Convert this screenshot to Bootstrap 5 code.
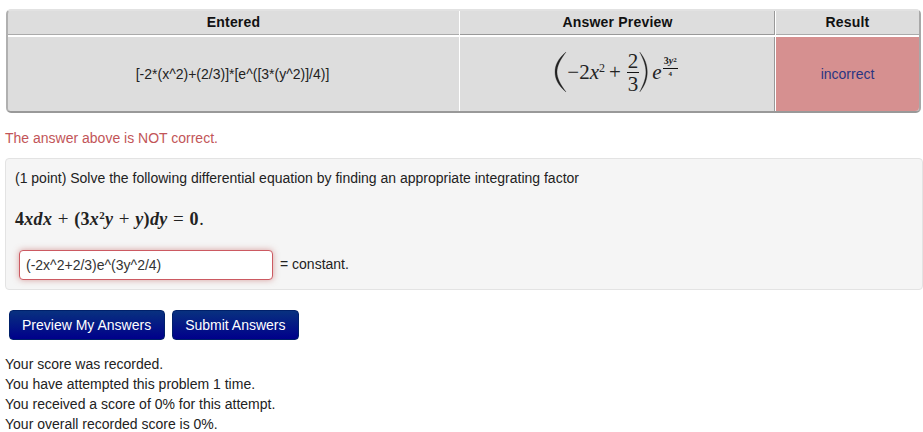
<!DOCTYPE html>
<html lang="en"><head><meta charset="utf-8"><title>Problem</title>
<link rel="stylesheet" href="https://cdn.jsdelivr.net/npm/bootstrap@5.3.0/dist/css/bootstrap.min.css">
<style>
html,body{overflow:hidden}
body{font-family:"Liberation Sans",Arial,sans-serif;font-size:14px;line-height:20px;color:#222;background:#fff;padding:9px 2px 0 5px}
.attempt-tbl{width:915px;margin:0 0 0 1px;border-collapse:separate;border-spacing:0;border:2px solid;border-color:#e2e2e2 #a8a8a8 #999 #b0b0b0;border-radius:5px;background:#ddd;table-layout:fixed}
.attempt-tbl th,.attempt-tbl td{background:#ddd;text-align:center;vertical-align:middle;padding:0;color:#222;border-right:1px solid #fff;border-left:0}
.attempt-tbl th{height:26px;font-weight:700;color:#111;border-bottom:2px solid #fff;box-shadow:inset 0 -1px 0 #aaa;letter-spacing:.2px;padding-bottom:2px}
.attempt-tbl td{height:74px}
.attempt-tbl td:first-child{padding-right:2px}
.attempt-tbl th:last-child,.attempt-tbl td:last-child{border-right:0}
.attempt-tbl th:nth-child(2),.attempt-tbl td:nth-child(2){box-shadow:inset -1px 0 0 #999}
.attempt-tbl th:nth-child(2){box-shadow:inset -1px -1px 0 #999}
.attempt-tbl th:first-child{border-top-left-radius:4px}
.attempt-tbl td:first-child{border-bottom-left-radius:4px}
.attempt-tbl td:last-child{border-bottom-right-radius:4px}
.attempt-tbl .bad-cell{background:#d69090;color:#2a3582}
.cw{width:452px}.cp{width:316px}
.msg-wrong{color:#c25558;margin:15px 0 0;height:20px}
.prob-box{background:#f5f5f5;border:1px solid #e3e3e3;border-radius:4px;margin:10px -2px 0 0;padding:9px;height:132px}
.prob-line{margin:0;height:20px}
.eq-line{font-family:"Liberation Serif",serif;font-size:18px;font-weight:700;height:28px;line-height:28px;margin-top:17px;color:#222;letter-spacing:.3px;column-gap:5.500px}
.eq-line i{font-weight:700}
.eq-line sup{font-size:11px;top:-.55em;line-height:0}
.eq-line .opr{font-weight:400;font-size:19px}
.eq-line .dot{font-weight:400;margin-left:-5px}
.ans-row{margin-top:17px;margin-left:4px}
.ans-input{width:254px;height:30px;border:1px solid #cc5a62;border-radius:4px;background:#fff;padding:4px 6px;font-size:14px;line-height:20px;color:#333;box-shadow:0 0 6px rgba(185,74,72,.5);font-family:inherit}
.ans-input:focus{outline:0;border-color:#cc5a62;box-shadow:0 0 6px rgba(185,74,72,.5)}
.const-txt{margin-left:7px;margin-bottom:2px}
.btn-row{margin:20px 0 0 4px;column-gap:7px}
.act-btn{height:30px;padding:0 12px;border:1px solid #00206a;border-radius:4px;color:#fff;font-size:14px;line-height:28px;background:linear-gradient(#08317f,#00008b)}
.act-btn:first-child{padding-right:13px}
.act-btn:hover{color:#fff;background:linear-gradient(#08317f,#00008b)}
.score-lines{margin-top:14px}
.score-lines div{height:20px}
.math-prev{font-family:"Liberation Serif",serif;font-size:21px;color:#222;margin-left:-3px}
.math-prev i{font-style:italic}
.math-prev sup{font-size:12px;top:-.55em;line-height:0}
.opr-prev{margin:0 6px 0 4px}
.frac{display:inline-flex;flex-direction:column;align-items:center;line-height:1}
.frac-big{margin-top:3px}
.frac .n{border-bottom:1px solid #111;padding:0 1px 2px;line-height:17px}
.frac .d{padding-top:3px;line-height:17px}
.frac.mini{font-weight:700;margin-left:1px;margin-bottom:9px}
.mini .n{line-height:10px;padding:0 1px 2px;font-size:10px;white-space:nowrap}
.mini .n sup{font-size:7px;top:-.3em}
.mini .d{font-size:7px;line-height:8px;padding-top:1px}
</style></head><body>
<table class="attempt-tbl">
<colgroup><col class="cw"><col class="cp"><col></colgroup>
<thead><tr><th>Entered</th><th>Answer Preview</th><th>Result</th></tr></thead>
<tbody><tr>
<td>[-2*(x^2)+(2/3)]*[e^([3*(y^2)]/4)]</td>
<td><span class="math-prev d-inline-flex align-items-center">
<svg width="13" height="42" viewBox="0 0 13 42"><path d="M12 1C4 8 1 14 1 21s3 13 11 20C6 33 3 27 3 21S6 9 12 1Z" fill="#222" stroke="#222" stroke-width=".3"/></svg>
<span>−2<i>x</i><sup>2</sup></span><span class="opr-prev">+</span>
<span class="frac frac-big"><span class="n">2</span><span class="d">3</span></span>
<svg width="9" height="42" viewBox="0 0 13 42" preserveAspectRatio="none"><path d="M1 1c8 7 11 13 11 20s-3 13-11 20c6-8 9-14 9-20S7 9 1 1Z" fill="#222" stroke="#222" stroke-width=".3"/></svg>
<span class="ms-1"><i>e</i></span>
<span class="frac mini"><span class="n">3<i>y</i><sup>2</sup></span><span class="d">4</span></span>
</span></td>
<td class="bad-cell">incorrect</td>
</tr></tbody>
</table>
<p class="msg-wrong">The answer above is NOT correct.</p>
<div class="prob-box">
<p class="prob-line">(1 point) Solve the following differential equation by finding an appropriate integrating factor</p>
<div class="eq-line d-flex"><span>4<i>xdx</i></span><span class="opr">+</span><span>(3<i>x</i><sup>2</sup><i>y</i></span><span class="opr">+</span><span><i>y</i>)<i>dy</i></span><span class="opr">=</span><span>0</span><span class="dot">.</span></div>
<div class="ans-row d-flex align-items-center">
<input class="ans-input" type="text" value="(-2x^2+2/3)e^(3y^2/4)" aria-label="answer">
<span class="const-txt">= constant.</span>
</div>
</div>
<div class="btn-row d-flex">
<button type="button" class="btn act-btn">Preview My Answers</button>
<button type="button" class="btn act-btn">Submit Answers</button>
</div>
<div class="score-lines">
<div>Your score was recorded.</div>
<div>You have attempted this problem 1 time.</div>
<div>You received a score of 0% for this attempt.</div>
<div>Your overall recorded score is 0%.</div>
</div>
<script src="https://cdn.jsdelivr.net/npm/bootstrap@5.3.0/dist/js/bootstrap.bundle.min.js"></script>
</body></html>
